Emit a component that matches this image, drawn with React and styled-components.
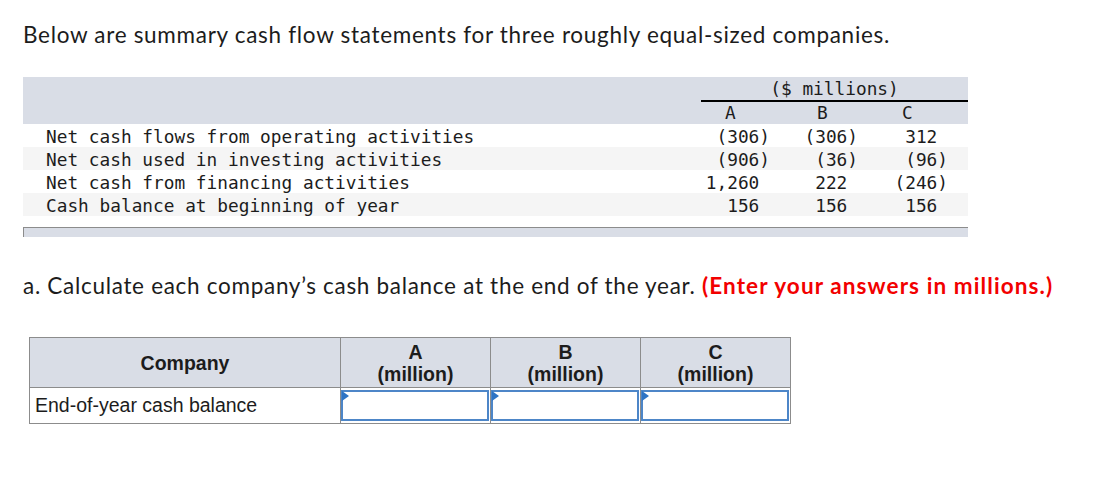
import React from "react";
import styled, { createGlobalStyle } from "styled-components";

const GlobalStyle = createGlobalStyle`
  body {
    margin: 0;
    background: #ffffff;
    color: #1c1c1c;
  }
`;

const Page = styled.div`
  padding: 21px 0 0 23px;
  width: 1074px;
`;

const Prompt = styled.p`
  margin: 0;
  font-family: Lato, "Open Sans", sans-serif;
  font-size: 22.5px;
  letter-spacing: 0.7px;
  line-height: 27px;
  color: #1c1c1c;
  white-space: nowrap;
`;

const Emphasis = styled.span`
  color: #f20000;
  font-weight: 700;
  letter-spacing: 1.1px;
`;

const SummaryTable = styled.table`
  margin-top: 29px;
  border-collapse: collapse;
  width: 945px;
  table-layout: fixed;
  font-family: "DejaVu Sans Mono", "Liberation Mono", monospace;
  font-size: 17.8px;
  color: #1c1c1c;
`;

const HeadRow = styled.tr`
  background: #d9dde6;
`;

const BodyRow = styled.tr`
  background: ${(p) => (p.$shaded ? "#f5f5f5" : "#ffffff")};
`;

const Units = styled.th`
  font-weight: 400;
  height: 23px;
  padding: 0;
  text-align: center;
  border-bottom: 2px solid #000000;
  line-height: 22px;
`;

const Letter = styled.th`
  font-weight: 400;
  height: 22px;
  padding: 0 0 0 ${(p) => p.$indent}px;
  text-align: left;
  line-height: 22px;
`;

const Label = styled.td`
  height: 21px;
  padding: 2px 0 0 23px;
  line-height: 21px;
  white-space: nowrap;
`;

const Amount = styled.td`
  height: 21px;
  padding: 2px ${(p) => p.$pad}px 0 0;
  text-align: right;
  line-height: 21px;
  white-space: nowrap;
`;

const Hang = styled.span`
  display: inline-block;
  width: ${(p) => (p.$neg ? "0" : "1ch")};
`;

const FootBar = styled.div`
  margin-top: 11px;
  width: 944px;
  height: 9px;
  background: #d9dde6;
  border-top: 1px solid #8c8c8c;
  border-left: 1px solid #8c8c8c;
`;

const Question = styled(Prompt)`
  margin-top: 35px;
`;

const AnswerTable = styled.table`
  margin: 38px 0 0 6px;
  border-collapse: collapse;
  table-layout: fixed;
  width: 761px;
  font-family: "Liberation Sans", Arial, sans-serif;
  font-size: 19.5px;
  color: #1c1c1c;
`;

const HeadCell = styled.th`
  background: #d9dde6;
  border: 1px solid #8c8c8c;
  height: 49px;
  padding: 0;
  font-weight: 700;
  line-height: 22px;
  text-align: center;
`;

const RowLabel = styled.td`
  border: 1px solid #8c8c8c;
  height: 33px;
  padding: 0 0 0 5px;
  text-align: left;
  white-space: nowrap;
`;

const InputCell = styled.td`
  border: 1px solid #8c8c8c;
  padding: 1px 1px 1px 0;
  height: 33px;
`;

const InputBox = styled.div`
  position: relative;
  height: 27px;
  border: 2px solid #4d86c8;
  background: #ffffff;

  &::before {
    content: "";
    position: absolute;
    left: -1px;
    top: -1px;
    border-top: 5px solid transparent;
    border-bottom: 5px solid transparent;
    border-left: 7px solid #2f74c4;
  }
`;

const rows = [
  { label: "Net cash flows from operating activities", values: ["(306)", "(306)", "312"] },
  { label: "Net cash used in investing activities", values: ["(906)", "(36)", "(96)"] },
  { label: "Net cash from financing activities", values: ["1,260", "222", "(246)"] },
  { label: "Cash balance at beginning of year", values: ["156", "156", "156"] },
];

const pads = [20, 21, 20];
const indents = [24, 27, 23];

function renderAmount(value) {
  const neg = value.startsWith("(");
  return (
    <>
      {value}
      <Hang $neg={neg} />
    </>
  );
}

export default function App() {
  return (
    <>
      <GlobalStyle />
      <Page>
        <Prompt>
          Below are summary cash flow statements for three roughly equal-sized companies.
        </Prompt>

        <SummaryTable>
          <colgroup>
            <col style={{ width: 678 }} />
            <col style={{ width: 89 }} />
            <col style={{ width: 89 }} />
            <col style={{ width: 89 }} />
          </colgroup>
          <thead>
            <HeadRow>
              <th rowSpan={2} />
              <Units colSpan={3}>($ millions)</Units>
            </HeadRow>
            <HeadRow>
              {["A", "B", "C"].map((l, i) => (
                <Letter key={l} $indent={indents[i]}>
                  {l}
                </Letter>
              ))}
            </HeadRow>
          </thead>
          <tbody>
            {rows.map((row, i) => (
              <BodyRow key={row.label} $shaded={i % 2 === 1}>
                <Label>{row.label}</Label>
                {row.values.map((v, j) => (
                  <Amount key={j} $pad={pads[j]}>
                    {renderAmount(v)}
                  </Amount>
                ))}
              </BodyRow>
            ))}
          </tbody>
        </SummaryTable>
        <FootBar />

        <Question>
          a. Calculate each company’s cash balance at the end of the year.{" "}
          <Emphasis>(Enter your answers in millions.)</Emphasis>
        </Question>

        <AnswerTable>
          <colgroup>
            <col style={{ width: 311 }} />
            <col style={{ width: 150 }} />
            <col style={{ width: 150 }} />
            <col style={{ width: 150 }} />
          </colgroup>
          <thead>
            <tr>
              <HeadCell>Company</HeadCell>
              {["A", "B", "C"].map((l) => (
                <HeadCell key={l}>
                  {l}
                  <br />
                  (million)
                </HeadCell>
              ))}
            </tr>
          </thead>
          <tbody>
            <tr>
              <RowLabel>End-of-year cash balance</RowLabel>
              {["A", "B", "C"].map((l) => (
                <InputCell key={l}>
                  <InputBox />
                </InputCell>
              ))}
            </tr>
          </tbody>
        </AnswerTable>
      </Page>
    </>
  );
}
